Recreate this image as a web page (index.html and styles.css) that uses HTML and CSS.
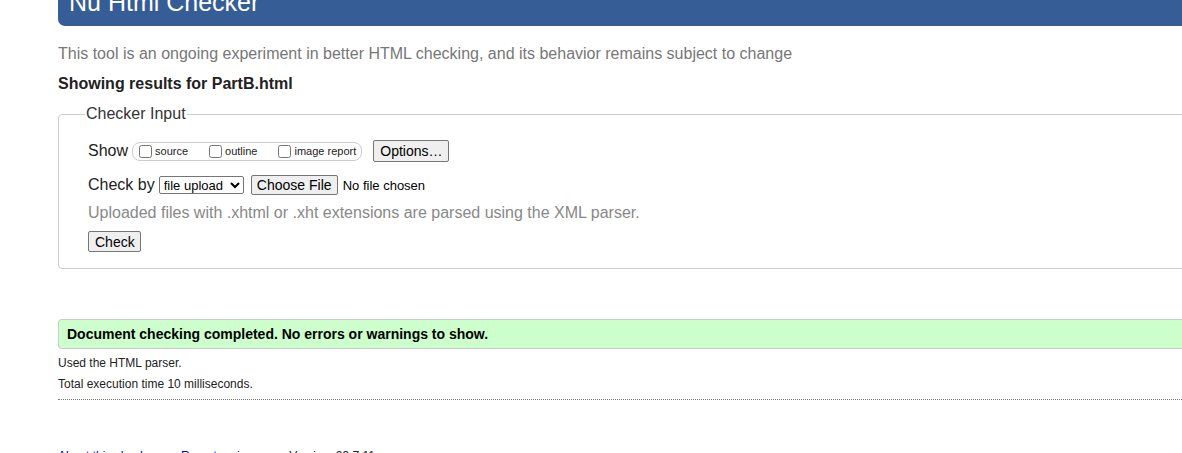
FILE: index.html
```html
<!DOCTYPE html>
<html>
<head>
<meta charset="utf-8">
<title>Nu Html Checker</title>
<link rel="stylesheet" href="styles.css">
</head>
<body>
<div class="page">
  <h1 class="title">Nu Html Checker</h1>
  <p class="intro">This tool is an ongoing experiment in better HTML checking, and its behavior remains subject to change</p>
  <p class="results">Showing results for PartB.html</p>
  <fieldset class="input">
    <legend class="legend">Checker Input</legend>
    <div class="row row-show">
      <span class="label">Show</span>
      <span class="group">
        <label class="opt"><input type="checkbox" class="cb">source</label>
        <label class="opt"><input type="checkbox" class="cb">outline</label>
        <label class="opt last"><input type="checkbox" class="cb">image report</label>
      </span>
      <button class="btn btn-options" type="button">Options…</button>
    </div>
    <div class="row row-check">
      <span class="label">Check by</span>
      <select class="select"><option>file upload</option></select>
      <button class="btn btn-file" type="button">Choose File</button>
      <span class="nofile">No file chosen</span>
    </div>
    <p class="hint">Uploaded files with .xhtml or .xht extensions are parsed using the XML parser.</p>
    <div class="row row-submit">
      <button class="btn btn-check" type="button">Check</button>
    </div>
  </fieldset>
  <div class="success">Document checking completed. No errors or warnings to show.</div>
  <p class="details">Used the HTML parser.</p>
  <p class="details">Total execution time 10 milliseconds.</p>
  <hr class="sep">
  <p class="footer"><a class="link">About this checker</a><span class="dot">•</span><a class="link">Report an issue</a><span class="dot">•</span>Version: 23.7.11</p>
</div>
</body>
</html>
```

FILE: styles.css
```css
html {
  overflow: hidden;
}
body {
  margin: 0;
  font-family: "Liberation Sans", Arial, sans-serif;
  color: #222;
  background: #fff;
}
.page {
  margin-left: 58px;
  width: 1200px;
}
.title {
  margin: -10px 0 0 0;
  padding: 0 11px 11px;
  background: #365d95;
  color: #fff;
  font-size: 25px;
  line-height: 25px;
  font-weight: normal;
  border-radius: 0 0 0 7px;
}
.intro {
  margin: 19px 0 0;
  font-size: 16px;
  line-height: 18px;
  color: #777;
}
.results {
  margin: 12px 0 0;
  font-size: 16px;
  line-height: 18px;
  font-weight: bold;
}
.input {
  margin: 12px 0 0;
  padding: 17px 29px 16px;
  border: 1px solid #ccc;
  border-radius: 4px;
  min-width: 0;
}
.legend {
  padding: 0 1px;
  margin-left: -3px;
  font-size: 16px;
  line-height: 18px;
  color: #333;
}
.row {
  display: flex;
  align-items: center;
}
.row-show {
  height: 22px;
}
.row-check {
  height: 22px;
  margin-top: 12px;
}
.row-submit {
  margin-top: 9px;
  height: 21px;
}
.label {
  font-size: 16px;
  line-height: 18px;
  color: #222;
}
.group {
  display: flex;
  align-items: center;
  margin-left: 4px;
  height: 17px;
  padding: 0 5px 0 2px;
  border: 1px solid #ccc;
  border-radius: 8px;
}
.opt {
  display: flex;
  align-items: center;
  font-size: 11px;
  margin-right: 17px;
  color: #222;
}
.opt.last {
  margin-right: 0;
}
.cb {
  width: 13px;
  height: 13px;
  margin: 1px 3px 0 4px;
}
.btn {
  font-family: "Liberation Sans", Arial, sans-serif;
  font-size: 14px;
  background: #efefef;
  border: 1px solid #767676;
  border-radius: 2px;
  color: #000;
  padding: 0 6px;
  height: 21px;
  white-space: nowrap;
}
.btn-options {
  margin-left: 11px;
  width: 76px;
  height: 22px;
}
.select {
  font-family: "Liberation Sans", Arial, sans-serif;
  font-size: 13px;
  height: 18px;
  width: 85px;
  margin-left: 4px;
  padding: 0;
  border: 1px solid #767676;
  border-radius: 2px;
  background: #fff;
  color: #000;
}
.btn-file {
  margin-left: 7px;
  width: 87px;
  padding: 0 4px;
  height: 20px;
}
.nofile {
  margin-left: 5px;
  font-size: 13px;
  color: #000;
}
.hint {
  margin: 8px 0 0;
  font-size: 16px;
  line-height: 18px;
  color: #888;
}
.btn-check {
  width: 53px;
}
.success {
  margin-top: 50px;
  height: 28px;
  line-height: 28px;
  padding-left: 8px;
  background: #ccffcc;
  border: 1px solid #ccc;
  border-right: none;
  border-radius: 4px 0 0 4px;
  font-size: 14px;
  font-weight: bold;
  color: #000;
}
.details {
  margin: 7px 0 0;
  font-size: 12px;
  line-height: 15px;
  color: #222;
}
.details + .details {
  margin-top: 6px;
}
.sep {
  margin: 7px 0 0;
  border: none;
  border-top: 1px dotted #777;
  height: 0;
}
.footer {
  margin: 49px 0 0;
  font-size: 12px;
  line-height: 15px;
  color: #222;
}
.dot {
  margin: 0 10px;
}
.link {
  color: #00c;
}
```
